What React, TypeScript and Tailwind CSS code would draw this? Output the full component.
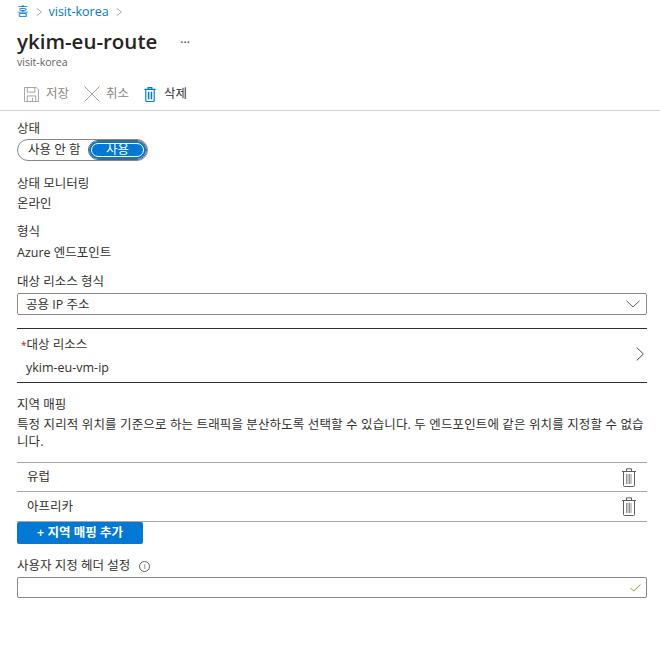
const font = { fontFamily: '"Open Sans", "Noto Sans CJK KR", sans-serif' };

function Trash({ className }: { className?: string }) {
  return (
    <svg viewBox="0 0 14 19" className={className} fill="none" stroke="currentColor" strokeWidth="1">
      <path d="M0 3.5h14M1.5 3.5v14a1 1 0 0 0 1 1h9a1 1 0 0 0 1-1v-14M4.5 3.5V.8h5v2.7" />
      <path d="M4.5 6v10M6 6v10M7.5 6v10M9 6v10" strokeWidth="0.9" opacity="0.75" />
    </svg>
  );
}

function Row({ label, h }: { label: string; h: string }) {
  return (
    <div className={`flex items-center justify-between border-b border-[#a6a6a6] pl-[10px] pr-[11px] text-[#323130] ${h}`}>
      <span>{label}</span>
      <Trash className="h-[19px] w-[14px] text-[#605e5c]" />
    </div>
  );
}

export default function App() {
  return (
    <div style={font} className="h-[645px] w-[660px] overflow-hidden bg-white text-[12.5px] leading-[18px] text-[#323130]">
      <nav className="flex h-[25px] items-center gap-[7px] pl-[17px] pb-[2px] text-[#0078d4]">
        <span>홈</span>
        <svg viewBox="0 0 8 12" className="h-[10px] w-[6px] text-[#8a8886]" fill="none" stroke="currentColor"><path d="M1 1l6 5-6 5" /></svg>
        <span>visit-korea</span>
        <svg viewBox="0 0 8 12" className="h-[10px] w-[6px] text-[#8a8886]" fill="none" stroke="currentColor"><path d="M1 1l6 5-6 5" /></svg>
      </nav>
      <header className="pl-[17px]">
        <div className="flex h-[31px] items-center">
          <h1 className="text-[20.5px] font-semibold leading-[28px] text-[#252423]">ykim-eu-route</h1>
          <span className="ml-[23px] pt-[5px] text-[12px] leading-none text-[#323130]">···</span>
        </div>
        <p className="mt-[-2px] h-[16px] text-[10.5px] leading-[16px] text-[#605e5c]">visit-korea</p>
      </header>
      <div className="mt-[8px] flex h-[33px] items-center gap-[15px] border-b border-[#d2d0ce] pl-[24px]">
        <span className="flex items-center gap-[7px] text-[#8a8886]">
          <svg viewBox="0 0 16 16" className="h-[15px] w-[15px]" fill="none" stroke="#a19f9d"><path d="M.5.5h12.5l2.5 2.5v12.5H.5zM3.5 .5v5h8v-5M3.5 15.5v-6h9v6M9 11.5v4" /></svg>
          저장
        </span>
        <span className="flex items-center gap-[6px] text-[#8a8886]">
          <svg viewBox="0 0 16 16" className="h-[16px] w-[16px]" fill="none" stroke="#a19f9d"><path d="M.5.5l15 15M15.5.5l-15 15" /></svg>
          취소
        </span>
        <span className="flex items-center gap-[8px]">
          <svg viewBox="0 0 12 16" className="h-[15px] w-[12px]" fill="none" stroke="#0078d4" strokeWidth="1.2"><path d="M0 2.5h12M1.5 2.5v12a1 1 0 0 0 1 1h7a1 1 0 0 0 1-1v-12M4 2.5V.7h4v1.8" /><path d="M4.5 5v8M7.5 5v8" strokeWidth="1.6" /></svg>
          삭제
        </span>
      </div>
      <main className="pl-[17px] pr-[13px]">
        <div className="mt-[9px]">상태</div>
        <div className="mt-[1px] flex h-[22px] w-[131px] items-center rounded-full border border-[#8a8886] pl-[10px] pr-[1px]">
          <span className="flex-1">사용 안 함</span>
          <span className="flex h-[18px] w-[57px] items-center justify-center rounded-full border-2 border-[#0078d4] bg-[#0078d4] text-white outline outline-1 outline-[#605e5c]">
            <span className="flex h-[14px] w-[55px] items-center justify-center rounded-full border border-white">사용</span>
          </span>
        </div>
        <div className="mt-[14px]">상태 모니터링</div>
        <div className="mt-[2px]">온라인</div>
        <div className="mt-[10px]">형식</div>
        <div className="mt-[3px]">Azure 엔드포인트</div>
        <div className="mt-[11px]">대상 리소스 형식</div>
        <div className="mt-[2px] flex h-[22px] items-center justify-between rounded-[2px] border border-[#8a8886] pl-[8px] pr-[6px]">
          <span className="pt-[1px]">공용 IP 주소</span>
          <svg viewBox="0 0 14 8" className="h-[8px] w-[14px] text-[#605e5c]" fill="none" stroke="currentColor"><path d="M.5.8L7 7l6.5-6.2" /></svg>
        </div>
        <div className="mt-[13px] flex h-[55px] items-start justify-between border-y border-[#323130] pr-[3px]">
          <div className="pl-[4px] pt-[8px]">
            <div className="flex items-center leading-[16px]"><span className="text-[10px] text-[#a4262c]">*</span>대상 리소스</div>
            <div className="mt-[6px] pl-[5px]">ykim-eu-vm-ip</div>
          </div>
          <svg viewBox="0 0 8 14" className="mt-[18px] h-[14px] w-[8px] text-[#484644]" fill="none" stroke="currentColor"><path d="M.7.5L7.3 7 .7 13.5" /></svg>
        </div>
        <div className="mt-[13px]">지역 매핑</div>
        <p className="mt-[2px] w-[630px] break-all leading-[17px] tracking-[0.12px]">특정 지리적 위치를 기준으로 하는 트래픽을 분산하도록 선택할 수 있습니다. 두 엔드포인트에 같은 위치를 지정할 수 없습니다.</p>
        <div className="mt-[12px] border-t border-[#a6a6a6]">
          <Row label="유럽" h="h-[29px]" />
          <Row label="아프리카" h="h-[30px]" />
        </div>
        <div className="flex h-[22px] w-[126px] items-center justify-center rounded-[2px] bg-[#0078d4] font-semibold text-white">+ 지역 매핑 추가</div>
        <div className="mt-[13px] flex items-center gap-[9px]">
          <span>사용자 지정 헤더 설정</span>
          <span className="flex h-[11px] w-[11px] items-center justify-center rounded-full border border-[#605e5c] text-[8px] leading-none text-[#605e5c]">i</span>
        </div>
        <div className="mt-[2px] flex h-[21px] items-center justify-end rounded-[2px] border border-[#8a8886] pr-[5px]">
          <svg viewBox="0 0 12 9" className="h-[8px] w-[11px]" fill="none" stroke="#57a300"><path d="M.5 4.5L4 8l7.5-7.5" /></svg>
        </div>
      </main>
    </div>
  );
}
